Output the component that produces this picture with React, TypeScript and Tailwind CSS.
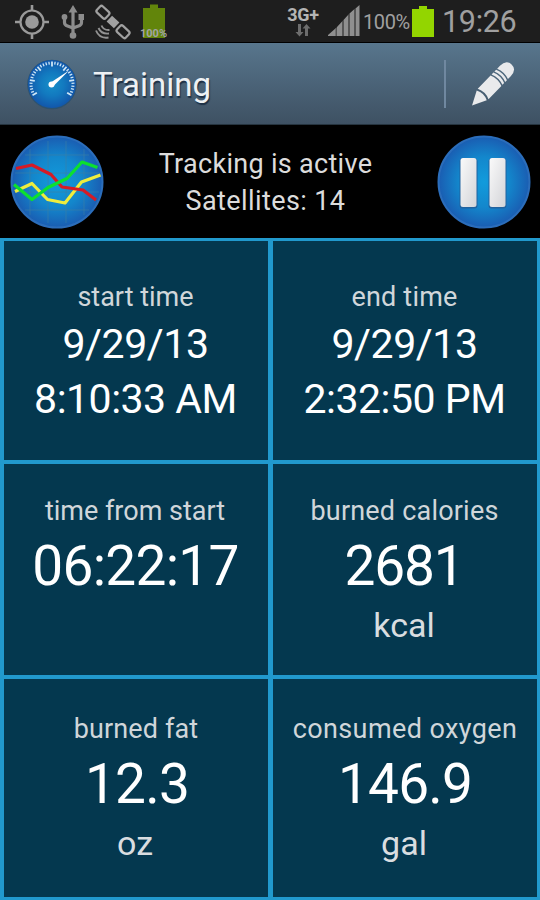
import React from "react";

interface Line {
  text: string;
  className: string;
}

interface Cell {
  label: Line;
  values: Line[];
  className: string;
}

const DATE = "h-[55px] leading-[57px] text-[41px] pr-[1px]";
const VALUE = "h-[62px] leading-[62px] text-[55px] mt-[5px]";
const UNIT = "h-[56px] leading-[56px] text-[34px] text-[#d9dde0] pr-[2px]";

const cells: Cell[] = [
  {
    label: { text: "start time", className: "tracking-[0px] pr-[1px]" },
    values: [
      { text: "9/29/13", className: `${DATE} tracking-[-0.4px]` },
      { text: "8:10:33 AM", className: `${DATE} tracking-[-0.5px]` },
    ],
    className: "pt-[37px]",
  },
  {
    label: { text: "end time", className: "tracking-[0.2px] pr-[1px]" },
    values: [
      { text: "9/29/13", className: `${DATE} tracking-[-0.4px]` },
      { text: "2:32:50 PM", className: `${DATE} tracking-[-0.5px]` },
    ],
    className: "pt-[37px]",
  },
  {
    label: { text: "time from start", className: "tracking-[0px] pr-[2px]" },
    values: [{ text: "06:22:17", className: `${VALUE} tracking-[-0.7px] pr-[1px]` }],
    className: "pt-[28px]",
  },
  {
    label: { text: "burned calories", className: "tracking-[0.2px] pr-[1px]" },
    values: [
      { text: "2681", className: `${VALUE} tracking-[-1.2px] pr-[2px]` },
      { text: "kcal", className: UNIT },
    ],
    className: "pt-[28px]",
  },
  {
    label: { text: "burned fat", className: "tracking-[0.1px]" },
    values: [
      { text: "12.3", className: `${VALUE} tracking-[-0.8px] pl-[2px]` },
      { text: "oz", className: UNIT },
    ],
    className: "pt-[31px]",
  },
  {
    label: { text: "consumed oxygen", className: "tracking-[0.4px]" },
    values: [
      { text: "146.9", className: `${VALUE} tracking-[-0.8px]` },
      { text: "gal", className: UNIT },
    ],
    className: "pt-[31px]",
  },
];

const StatusIcons: React.FC = () => (
  <svg width="170" height="42" viewBox="0 0 170 42" fill="none">
    {/* gps */}
    <g stroke="#9a9a9a" strokeWidth="2">
      <circle cx="32" cy="22" r="11.5" strokeWidth="2.2" />
      <path d="M32 5v6M32 33v6M15 22h6M43 22h6" strokeWidth="2.6" />
    </g>
    <circle cx="32" cy="22" r="6.8" fill="#9a9a9a" />
    {/* usb */}
    <g stroke="#8c8c8c" strokeWidth="3.2">
      <path d="M73 10v26M64.500 17v5.500q0 2.500 3 3.500l5.500 2M81.500 17v5.500q0 2.500-3 3.500l-5.500 2" />
    </g>
    <path d="M73 5l4.500 7.500h-9zM78.500 14h5.500v6h-5.500z" fill="#8c8c8c" />
    <circle cx="64.500" cy="17" r="2.900" fill="#8c8c8c" />
    <circle cx="73" cy="35.500" r="3.300" fill="#8c8c8c" />
    {/* satellite */}
    <g transform="translate(113 22) rotate(43)" stroke="#a0a0a0" strokeWidth="2.200">
      <rect x="-20" y="-4.500" width="12" height="8.500" rx="2" />
      <rect x="8" y="-4" width="12" height="8.500" rx="2" />
      <rect x="-5" y="-4" width="10" height="8" fill="#a0a0a0" stroke="none" />
    </g>
    <path
      d="M101.500 25.500q2 5 8 4.500M98.500 28q3 6.500 10.500 5.500M96 30.500q3.500 8.500 12.500 7"
      stroke="#929292"
      strokeWidth="1.900"
    />
    {/* battery */}
    <path d="M143 8h7V4.500h8V8h7v30h-22z" fill="#62850b" />
    <text
      x="153.500"
      y="37"
      textAnchor="middle"
      fontSize="11"
      fontWeight="700"
      fill="#a3a3a3"
      fontFamily="Roboto, sans-serif"
    >
      100%
    </text>
  </svg>
);

const SignalIcons: React.FC = () => (
  <div className="flex items-center h-[42px] text-[#a0a0a0]">
    <div className="w-[34px] flex flex-col items-center">
      <span className="h-[18px] leading-[18px] text-[18px] tracking-[-0.3px] font-bold whitespace-nowrap text-[#b4b4b4]">
        3G+
      </span>
      <svg width="18" height="13" viewBox="0 0 18 13" fill="#6d6d6d">
        <path d="M4 0h3v8h2.500L5.500 12.500 1.500 8H4zM11 12h3V4.500h2.500L12.500 0 8.500 4.500H11z" />
      </svg>
    </div>
    <svg className="ml-[8px]" width="34" height="42" viewBox="0 0 34 42" fill="#8f8f8f">
      <path d="M-1 36l9-8v8zM9 27l5.500-6v15H9zM15.500 20l5-5.500V36h-5zM21.500 13.500l5-4.500v27h-5zM27.500 8.500L31.500 5v31h-4z" />
      <path d="M7.500 28.500l1.500-1.500v9H7.500zM14.500 21l1-1v16h-1zM20.500 14.500l1-1V36h-1zM26.500 9l1-.5V36h-1z" fill="#555" />
    </svg>
    <span className="ml-[1px] w-[48px] mt-[2px] text-[20px] tracking-[-0.4px] whitespace-nowrap">
      100%
    </span>
    <svg className="ml-[1px]" width="22" height="42" viewBox="0 0 22 42" fill="#93d500">
      <path d="M0 9h7V6h8v3h7v28H0z" />
    </svg>
    <span className="ml-[8px] w-[98px] mt-[2px] text-[30.5px] tracking-[-0.3px] whitespace-nowrap">
      19:26
    </span>
  </div>
);

const ticks = Array.from({ length: 31 }, (_, i) => ({
  angle: -120 + i * 8,
  major: i % 5 === 0,
}));

const GaugeIcon: React.FC = () => (
  <svg width="52" height="52" viewBox="0 0 52 52">
    <defs>
      <radialGradient id="gauge">
        <stop offset="0" stopColor="#168fc9" />
        <stop offset="0.500" stopColor="#1279bf" />
        <stop offset="1" stopColor="#1257ab" />
      </radialGradient>
    </defs>
    <circle cx="26" cy="26.500" r="24.800" fill="#2c526f" />
    <circle cx="26" cy="26" r="24" fill="url(#gauge)" />
    {ticks.map((t) => (
      <path
        key={t.angle}
        d={t.major ? "M26 3.500v5" : "M26 3.500v3"}
        stroke="#cfe6f6"
        strokeWidth={t.major ? 1.8 : 1.3}
        transform={`rotate(${t.angle} 26 26)`}
      />
    ))}
    <path d="M24 25L43 12.500 27.500 28z" fill="#fff" />
    <circle cx="25.500" cy="26.500" r="3" fill="#fff" />
  </svg>
);

const PencilIcon: React.FC = () => (
  <svg width="46" height="48" viewBox="0 0 46 48">
    <g transform="translate(2 45.500) rotate(-46)" fill="#e9eaec">
      <path d="M0 0L14-7Q17.500 0 14 7z" />
      <path d="M16-7.500H34.500Q37.500 0 34.500 7.500H16Q19.500 0 16-7.500z" />
      <path d="M36-7.500h2.500q3 7.500 0 15H36q3-7.500 0-15zM40-7.500h2.500q3 7.500 0 15H40q3-7.500 0-15z" />
      <path d="M44-7.500h4q9 0 9 7.500t-9 7.500h-4q3-7.500 0-15z" />
    </g>
  </svg>
);

const Disc: React.FC<{ id: string; children: React.ReactNode }> = ({ id, children }) => (
  <svg width="94" height="94" viewBox="0 0 94 94" fill="none">
    <defs>
      <radialGradient id={id}>
        <stop offset="0" stopColor="#129bdc" />
        <stop offset="0.550" stopColor="#1387cc" />
        <stop offset="1" stopColor="#1a5db2" />
      </radialGradient>
      <linearGradient id="bar" x1="0" y1="0" x2="1" y2="1">
        <stop offset="0" stopColor="#fafafa" />
        <stop offset="1" stopColor="#d3d4d8" />
      </linearGradient>
    </defs>
    <circle cx="47" cy="47" r="45.500" fill={`url(#${id})`} stroke="#2b6dba" strokeWidth="2" />
    {children}
  </svg>
);

const ChartButton: React.FC = () => (
  <button aria-label="Chart">
    <Disc id="chartDisc">
      <path
        d="M15 20h64M5 38h84M5 57h84M15 75h64M20 14v66M38 6v82M56 6v82M74 14v66"
        stroke="#3c80a5"
        strokeWidth="1"
        opacity="0.600"
      />
      <g strokeWidth="3.200" strokeLinejoin="round">
        <path d="M5 56.500L22 48.500l15.500 16L55 68l16.500-21 19-7" stroke="#efed3d" />
        <path d="M6 33.500l16-3.500 19 9.500 11 12.500 21 3 13 10" stroke="#d51b26" />
        <path d="M4 49.500l18 15 16-12 19-9L72 27l15.500 5.500" stroke="#0ce02f" />
      </g>
    </Disc>
  </button>
);

const PauseButton: React.FC = () => (
  <button aria-label="Pause">
    <Disc id="pauseDisc">
      <rect x="22.500" y="23.500" width="18" height="50" rx="3" fill="#2163a0" />
      <rect x="51.500" y="23.500" width="18" height="50" rx="3" fill="#2163a0" />
      <rect x="23.500" y="23" width="16" height="49" rx="2.500" fill="url(#bar)" />
      <rect x="52.500" y="23" width="16" height="49" rx="2.500" fill="url(#bar)" />
    </Disc>
  </button>
);

const MetricCell: React.FC<{ cell: Cell }> = ({ cell }) => (
  <div className={`bg-[#04384f] flex flex-col items-center overflow-hidden whitespace-nowrap ${cell.className}`}>
    <h2 className={`h-[38px] leading-[38px] text-[27px] text-[#d0d6da] ${cell.label.className}`}>
      {cell.label.text}
    </h2>
    {cell.values.map((v) => (
      <p key={v.text} className={v.className}>
        {v.text}
      </p>
    ))}
  </div>
);

export default function App() {
  return (
    <div className="w-[540px] h-[900px] flex flex-col overflow-hidden bg-black text-white font-[Roboto,sans-serif]">
      <div className="h-[43px] shrink-0 flex justify-between bg-[#1e1e1e] border-b border-black">
        <StatusIcons />
        <SignalIcons />
      </div>

      <header className="h-[82px] shrink-0 flex items-center bg-gradient-to-b from-[#58768d] to-[#3e5163] border-b border-[#26343f] pl-[26px] pr-[24px]">
        <GaugeIcon />
        <h1 className="ml-[15px] mt-[2px] flex-1 text-[33px] text-[#eef1f4] tracking-[0px] [text-shadow:1px_2px_1px_#1d3045]">
          Training
        </h1>
        <div className="w-[2px] h-[48px] bg-[#7088a0]" />
        <button className="ml-[24px]" aria-label="Edit">
          <PencilIcon />
        </button>
      </header>

      <div className="h-[113px] shrink-0 flex items-center justify-between pl-[10px] pr-[9px]">
        <ChartButton />
        <div className="pr-[10px] pt-[2px] text-center text-[27px] leading-[37px] text-[#dcdcdc]">
          <p className="tracking-[0.3px]">Tracking is active</p>
          <p className="tracking-[0.4px]">Satellites: 14</p>
        </div>
        <PauseButton />
      </div>

      <main className="flex-1 grid grid-cols-2 grid-rows-[219px_211px_218px] gap-x-[5px] gap-y-[4px] bg-[#2199cd] pt-[3px] pb-[3px] pl-[4px] pr-[3px]">
        {cells.map((cell, i) => (
          <MetricCell key={i} cell={cell} />
        ))}
      </main>
    </div>
  );
}
